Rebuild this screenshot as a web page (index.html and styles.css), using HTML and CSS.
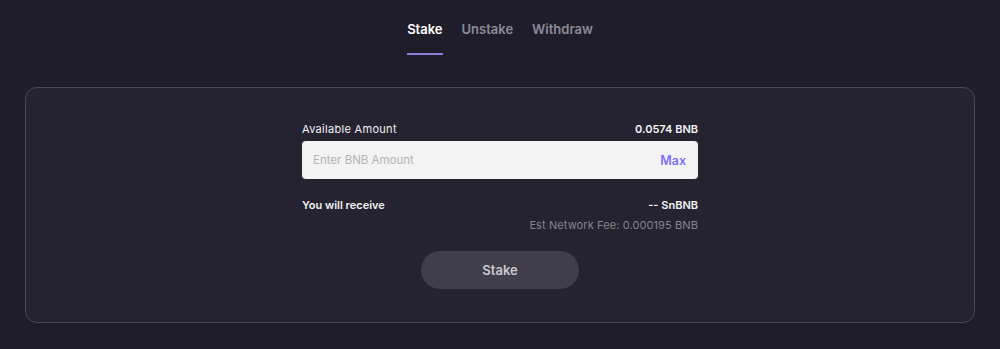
FILE: index.html
```html
<!DOCTYPE html>
<html lang="en">

<head>
    <meta charset="UTF-8">
    <meta name="viewport" content="width=device-width, initial-scale=1.0">
    <title>Stake BNB</title>
    <link rel="stylesheet" href="styles.css">
</head>

<body>
    <nav class="tabs">
        <a class="tab active">Stake</a>
        <a class="tab">Unstake</a>
        <a class="tab">Withdraw</a>
    </nav>

    <div class="card">
        <div class="form">
            <div class="row label-row">
                <span class="label">Available Amount</span>
                <span class="bold">0.0574 BNB</span>
            </div>
            <div class="amount-box">
                <input type="text" placeholder="Enter BNB Amount">
                <button class="max">Max</button>
            </div>
            <div class="row receive-row">
                <span class="bold">You will receive</span>
                <span class="bold">-- SnBNB</span>
            </div>
            <div class="fee">Est Network Fee: 0.000195 BNB</div>
            <button class="stake-btn">Stake</button>
        </div>
    </div>
</body>

</html>
```

FILE: styles.css
```css
html,
body {
    margin: 0;
    padding: 0;
}

body {
    background-color: #1f1d29;
    font-family: 'Inter', 'Open Sans', sans-serif;
    color: #ffffff;
    padding: 0 25px;
}

.tabs {
    display: flex;
    justify-content: center;
    gap: 19px;
    padding-top: 21px;
}

.tab {
    font-size: 13px;
    font-weight: 600;
    color: #8c8a97;
    padding-bottom: 16px;
    border-bottom: 2px solid transparent;
}

.tab.active {
    color: #ffffff;
    border-bottom-color: #8b80d9;
}

.card {
    margin-top: 32px;
    height: 234px;
    border: 1.5px solid #4a4856;
    border-radius: 12px;
    background-color: #25232f;
    display: flex;
    justify-content: center;
}

.form {
    width: 396px;
    padding-top: 34px;
    display: flex;
    flex-direction: column;
}

.row {
    display: flex;
    justify-content: space-between;
    font-size: 11px;
    color: #f2f2f5;
}

.label {
    letter-spacing: 0.3px;
}

.bold {
    font-weight: 600;
}

.amount-box {
    margin-top: 5px;
    height: 38px;
    background-color: #f3f3f3;
    border-radius: 4px;
    display: flex;
    align-items: center;
    padding: 0 12px 0 11px;
}

.amount-box input {
    flex: 1;
    border: none;
    background: transparent;
    outline: none;
    font-family: inherit;
    font-size: 11.5px;
    color: #333;
    padding: 0;
}

.amount-box input::placeholder {
    color: #b3b2b8;
}

.max {
    border: none;
    background: none;
    padding: 0;
    font-family: inherit;
    font-size: 12.5px;
    font-weight: 600;
    color: #8071f5;
}

.receive-row {
    margin-top: 19px;
}

.fee {
    margin-top: 6px;
    text-align: right;
    font-size: 11px;
    letter-spacing: 0.1px;
    color: #85838f;
}

.stake-btn {
    align-self: center;
    margin-top: 19px;
    width: 158px;
    height: 38px;
    border: none;
    border-radius: 19px;
    background-color: #403e4b;
    color: #cac8d2;
    font-family: inherit;
    font-size: 13px;
    font-weight: 600;
}
```
